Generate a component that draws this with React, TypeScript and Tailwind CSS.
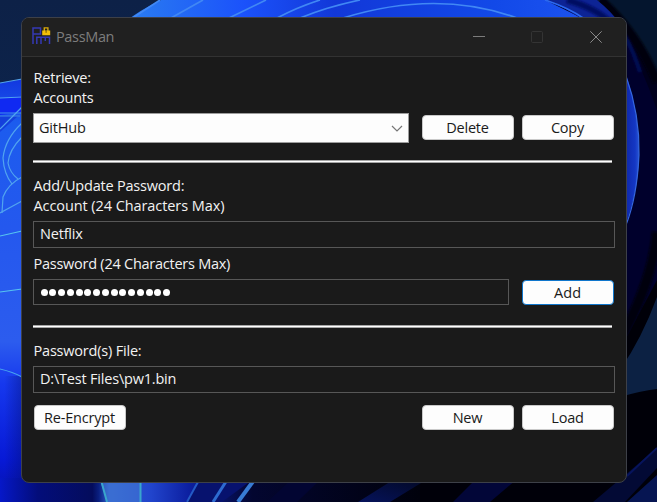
import type { ReactNode } from "react";

function Wallpaper() {
  return (
    <svg className="absolute inset-0" width="657" height="502" viewBox="0 0 657 502">
      <defs>
        <linearGradient id="sky" x1="0" y1="0" x2="0" y2="1">
          <stop offset="0" stopColor="#0d2147" />
          <stop offset="1" stopColor="#0a2c59" />
        </linearGradient>
        <linearGradient id="top" x1="130" y1="0" x2="585" y2="0" gradientUnits="userSpaceOnUse">
          <stop offset="0" stopColor="#2a7cf0" />
          <stop offset="0.25" stopColor="#1b52fb" />
          <stop offset="0.45" stopColor="#1238d8" />
          <stop offset="0.8" stopColor="#1249e8" />
          <stop offset="1" stopColor="#1c53f0" />
        </linearGradient>
        <linearGradient id="left" x1="0" y1="80" x2="0" y2="502" gradientUnits="userSpaceOnUse">
          <stop offset="0" stopColor="#1238e0" />
          <stop offset="0.1" stopColor="#1c5cee" />
          <stop offset="0.35" stopColor="#2458ee" />
          <stop offset="0.62" stopColor="#2c5cee" />
          <stop offset="0.72" stopColor="#1638ee" />
          <stop offset="0.9" stopColor="#0719d6" />
          <stop offset="1" stopColor="#0611a8" />
        </linearGradient>
        <linearGradient id="edge" x1="0" y1="0" x2="22" y2="0" gradientUnits="userSpaceOnUse">
          <stop offset="0.2" stopColor="#04106e" stopOpacity="0" />
          <stop offset="1" stopColor="#04106e" stopOpacity="0.4" />
        </linearGradient>
        <linearGradient id="bottom" x1="0" y1="0" x2="420" y2="0" gradientUnits="userSpaceOnUse">
          <stop offset="0" stopColor="#0618c8" />
          <stop offset="0.09" stopColor="#030d7a" />
          <stop offset="0.22" stopColor="#040c5c" />
          <stop offset="0.235" stopColor="#0a1f80" />
          <stop offset="0.26" stopColor="#2f5fd0" />
          <stop offset="0.36" stopColor="#2144cc" />
          <stop offset="0.45" stopColor="#0c1fa0" />
          <stop offset="0.6" stopColor="#030630" />
          <stop offset="1" stopColor="#00010c" />
        </linearGradient>
        <linearGradient id="band" x1="620" y1="0" x2="640" y2="0" gradientUnits="userSpaceOnUse">
          <stop offset="0" stopColor="#0b1f9a" />
          <stop offset="0.75" stopColor="#1437c4" />
          <stop offset="1" stopColor="#2c5ad8" />
        </linearGradient>
        <linearGradient id="ray" x1="0" y1="1" x2="1" y2="0">
          <stop offset="0" stopColor="#06135c" />
          <stop offset="1" stopColor="#020824" />
        </linearGradient>
        <filter id="soft" x="-50%" y="-50%" width="200%" height="200%"><feGaussianBlur stdDeviation="1.2" /></filter>
      </defs>
      <rect width="657" height="502" fill="url(#sky)" />

      <path d="M600 0H657V502H600Z" fill="#00001c" />
      <path d="M606 0Q638 32 657 74V0Z" fill="#04152e" />
      <path d="M600 0Q637 32 657 82" fill="none" stroke="#00000c" strokeWidth="9" filter="url(#soft)" />
      <path d="M540 0H597Q628 28 657 110V330L610 400V60Z" fill="#00002c" />
      <path d="M612 20Q628 34 640 72" fill="none" stroke="#060f55" strokeWidth="4" filter="url(#soft)" />
      <path d="M620 60Q640 105 639 160Q637 200 620 238Z" fill="url(#band)" />
      <path d="M626 76Q640 115 639 155Q637 197 626 225" fill="none" stroke="#3567df" strokeWidth="1.2" />
      <path d="M657 232Q653 280 620 340" fill="none" stroke="#00000c" strokeWidth="10" filter="url(#soft)" />
      <path d="M657 280L620 350V502H657Z" fill="#000008" />
      <path d="M657 297Q642 338 620 370V397Q640 391 657 389Z" fill="#0c2143" />

      <path d="M125 22Q140 10 161 0H545L590 22Z" fill="url(#top)" />
      <path d="M545 0H597Q612 12 620 24H588Q568 8 545 0Z" fill="#0d2495" />
      <path d="M567 0Q596 8 612 24" fill="none" stroke="#040d62" strokeWidth="6" filter="url(#soft)" />
      <g fill="none" stroke="#4188f4" strokeWidth="1.7">
        <path d="M131 19L160 0" />
        <path d="M171 18L203 0" />
        <path d="M229 18L266 0" />
        <path d="M277 18Q298 7 320 0" />
        <path d="M300 18Q327 7 360 0" />
        <path d="M343 18Q437 -11 517 18" />
        <path d="M545 0Q569 8 583 18" stroke="#2b68ef" />
      </g>

      <path d="M0 83L24 79V502H0Z" fill="url(#left)" />
      <path d="M0 98L24 96V112L0 115Z" fill="#1029f2" />
      <path d="M0 116H18L0 132Z" fill="#1440dc" />
      <path d="M0 376H24V480H0Z" fill="url(#edge)" />
      <g fill="none" stroke="#51a4ef" strokeWidth="1.2">
        <path d="M0 83L22 79" />
        <path d="M0 98L22 97" />
        <path d="M0 113L22 113" stroke="#3a86ea" />
        <path d="M0 116L20 116" stroke="#3a7ee5" />
        <path d="M0 129L22 107" />
        <path d="M22 123Q5 139 3 158Q4 174 12 184" />
        <path d="M22 137Q9 150 8 163Q10 173 18 179" />
        <path d="M22 177Q8 184 3 197L2 213" />
        <path d="M0 213L22 201" />
        <path d="M0 236L22 231" stroke="#56c5ef" />
        <path d="M0 292L22 289" stroke="#56c5ef" />
        <path d="M0 369Q13 372 22 377" stroke="#48a4ee" />
      </g>

      <path d="M0 478H420V502H0Z" fill="url(#bottom)" />
      <path d="M420 478H657V502H420Z" fill="#000009" />
      <path d="M100 480H140V502H107Z" fill="#4278d4" opacity=".6" />
      <path d="M201 480H252L222 502H186Z" fill="#07126e" />
      <g fill="none" stroke="#39a6cc" strokeWidth="2">
        <path d="M101 480L107 502" />
        <path d="M140.5 480V502" />
        <path d="M199 480L187 502" stroke="#245ac5" />
        <path d="M227 480L213 502" stroke="#2d6bd1" strokeWidth="3" />
        <path d="M254 480L238 502" stroke="#387bd4" strokeWidth="4" />
      </g>
      <path d="M291 480H320L297 502H267Z" fill="#020532" />
      <path d="M393 480H426L390 502H358Z" fill="url(#ray)" />
      <path d="M475 480H516L490 502H453Z" fill="#020638" />
      <path d="M593 502L657 448V468L625 502Z" fill="#030a35" />
      <path d="M627 502L657 475V502Z" fill="#061552" />
      <path d="M627 476L657 448" stroke="#07145c" strokeWidth="2" />
    </svg>
  );
}

function AppIcon() {
  return (
    <svg className="mb-[3px] h-[18px] w-[19px] shrink-0" viewBox="0 0 19 18" fill="none">
      <path
        d="M1 17V1H8.5V7H1M4.8 17V10.3H17.5V17M9 10.3V17M13.3 10.3V14"
        stroke="#3539b4"
        strokeWidth="1.5"
      />
      <path d="M12.3 4V.9H15.9V4" stroke="#d8a80a" strokeWidth="1.4" />
      <path d="M10.2 3.5H18.2V8.3H10.2Z" fill="#f2be08" />
      <path d="M14.1 3.8V5.8" stroke="#6d5608" />
    </svg>
  );
}

function Button({ children, primary = false }: { children: ReactNode; primary?: boolean }) {
  return (
    <button
      className={
        primary
          ? "flex h-[25px] w-[92px] items-center justify-center rounded-[4px] border-[1.5px] border-[#0f76cc] bg-[#fdfdfd] pr-px tracking-[0.1px] text-[#1a1a1a]"
          : "flex h-[25px] w-[92px] items-center justify-center rounded-[4px] border border-[#c9c9c9] bg-[#fdfdfd] pr-px text-[#1a1a1a]"
      }
    >
      <span className="leading-5">{children}</span>
    </button>
  );
}

function Label({ children }: { children: ReactNode }) {
  return <div className="h-5 whitespace-nowrap pl-[0.5px] leading-5">{children}</div>;
}

function Rule() {
  return <div className="h-[3px] w-[579px] border-y border-[#a6a6a6] bg-white" />;
}

export default function App() {
  return (
    <div className="relative h-[502px] w-[657px] overflow-hidden bg-[#0d2147] pl-[21px] pt-[17px] font-['Open_Sans',sans-serif] text-[14.5px] text-[#f2f2f2]">
      <Wallpaper />
      <main className="relative flex h-[466px] w-[606px] flex-col overflow-hidden rounded-[8px] border border-[#3d4048] bg-[#1a1a1a]">
        <header className="flex h-[39px] shrink-0 items-center border-b border-[#323232] bg-[#202020] pl-[10px] pr-[24px]">
          <AppIcon />
          <span className="ml-[5px] tracking-[-0.35px] text-[#7d7d7d]">PassMan</span>
          <div className="ml-auto flex items-center">
            <svg className="mr-[46px] size-3" viewBox="0 0 12 12"><path d="M0 5.5H12" stroke="#7c7c7c" /></svg>
            <svg className="mr-[47px] size-3" viewBox="0 0 12 12"><rect x=".5" y=".5" width="11" height="11" rx="1" fill="none" stroke="#343434" /></svg>
            <svg className="size-3" viewBox="0 0 12 12"><path d="M.3 .3L11.7 11.7M11.7 .3L.3 11.7" stroke="#8a8a8a" /></svg>
          </div>
        </header>

        <section className="flex flex-col pl-[11px] pr-[11px] pt-[11px] tracking-[-0.2px]">
          <Label>Retrieve:</Label>
          <Label>Accounts</Label>
          <div className="mt-[5px] flex h-[30px]">
            <div className="flex w-[376px] items-center justify-between border border-[#9d9d9d] bg-[#fdfdfd] pl-[5px] pr-[5px] text-[#1a1a1a]">
              <span>GitHub</span>
              <svg className="h-[7px] w-3" viewBox="0 0 12 7" fill="none">
                <path d="M1 1L6 6L11 1" stroke="#777" strokeWidth="1.2" />
              </svg>
            </div>
            <div className="ml-[13px] mt-[2px] flex gap-2">
              <Button>Delete</Button>
              <Button>Copy</Button>
            </div>
          </div>
          <div className="mt-[17px]"><Rule /></div>

          <div className="mt-[13px]">
            <Label>Add/Update Password:</Label>
            <Label><span className="tracking-[-0.08px]">Account (24 Characters Max)</span></Label>
          </div>
          <div className="mt-[5px] h-[27px] border border-[#575757] pl-[6px] leading-[24px]">Netflix</div>
          <div className="mt-[6px]">
            <Label><span className="tracking-[-0.25px]">Password (24 Characters Max)</span></Label>
          </div>
          <div className="mt-[5px] flex h-[26px]">
            <div className="flex w-[476px] items-center gap-[1.75px] border border-[#575757] pl-[6.5px]">
              {Array.from({ length: 15 }, (_, i) => (
                <span key={i} className="size-[7px] rounded-full bg-white" />
              ))}
            </div>
            <div className="ml-[13px] mt-px"><Button primary>Add</Button></div>
          </div>
          <div className="mt-[20px]"><Rule /></div>

          <div className="mt-[13px]">
            <Label>Password(s) File:</Label>
          </div>
          <div className="mt-[5px] h-[27px] border border-[#575757] pl-[6px] leading-[24px]">D:\Test Files\pw1.bin</div>
          <div className="mt-3 flex pl-px">
            <Button>Re-Encrypt</Button>
            <div className="ml-[296px] flex gap-2">
              <Button>New</Button>
              <Button>Load</Button>
            </div>
          </div>
        </section>
      </main>
    </div>
  );
}
